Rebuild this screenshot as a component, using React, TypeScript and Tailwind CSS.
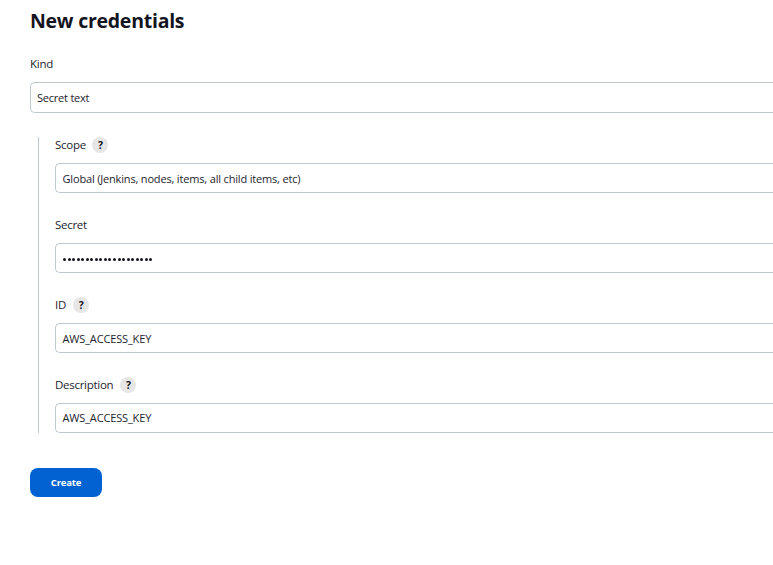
import type { ReactNode } from "react";

function Help() {
  return (
    <button
      type="button"
      className="flex size-4 items-center justify-center rounded-full bg-[#e6e6e6] text-[10.5px] leading-4 font-bold text-[#14141f]"
    >
      ?
    </button>
  );
}

function Label({ children, help, gap = "gap-1.5" }: { children: ReactNode; help?: boolean; gap?: string }) {
  return (
    <div className={`flex h-4 items-center text-[11.5px] leading-4 tracking-[-0.28px] text-[#24242f] ${gap}`}>
      <span>{children}</span>
      {help && <Help />}
    </div>
  );
}

function Box({ children, className = "h-[30px] pl-[7px]" }: { children: ReactNode; className?: string }) {
  return (
    <div
      className={`flex items-center rounded-l-[5px] border border-r-0 border-[#bdc9ce] bg-white text-[11px] leading-4 whitespace-nowrap text-[#24242f] ${className}`}
    >
      {children}
    </div>
  );
}

export default function App() {
  return (
    <main className="h-[565px] w-full overflow-hidden bg-white pt-2 pl-[30px] font-['Open_Sans','Noto_Sans',sans-serif] text-[#14141f]">
      <h1 className="h-[26px] text-[19.5px] leading-[26px] font-bold tracking-[-0.25px]">
        New credentials
      </h1>
      <div className="mt-[22px]">
        <Label>Kind</Label>
      </div>
      <Box className="mt-[10px] h-[31px] pl-[6px]">
        <span className="tracking-[-0.22px]">Secret text</span>
      </Box>

      <section className="mt-6 ml-2 flex h-[296px] flex-col gap-6 border-l border-[#bdc9ce] pl-4">
        <div className="flex flex-col gap-[10px]">
          <Label help gap="gap-[6.5px]">Scope</Label>
          <Box className="h-[30px] pt-[2px] pl-[6.5px]">
            <span className="tracking-[-0.17px]">Global (Jenkins, nodes, items, all child items, etc)</span>
          </Box>
        </div>
        <div className="flex flex-col gap-[10px]">
          <Label>Secret</Label>
          <Box>
            <div className="mt-[3px] flex gap-[1.55px]">
              {Array.from({ length: 20 }, (_, i) => (
                <span key={i} className="size-[3px] rounded-full bg-[#14141f]" />
              ))}
            </div>
          </Box>
        </div>
        <div className="flex flex-col gap-[10px]">
          <Label help gap="gap-[7px]">ID</Label>
          <Box className="h-[30px] pt-[2px] pl-[6.5px]">
            <span className="tracking-[-0.15px]">AWS_ACCESS_KEY</span>
          </Box>
        </div>
        <div className="flex flex-col gap-[10px]">
          <Label help gap="gap-[7px]">Description</Label>
          <Box className="h-[30px] pl-[6.5px]">
            <span className="tracking-[-0.15px]">AWS_ACCESS_KEY</span>
          </Box>
        </div>
      </section>

      <button
        type="button"
        className="mt-[35px] flex h-[29px] w-[72px] items-center justify-center rounded-[8px] bg-[#0262d2] text-[9.5px] leading-4 font-bold tracking-[-0.2px] text-white"
      >
        Create
      </button>
    </main>
  );
}
